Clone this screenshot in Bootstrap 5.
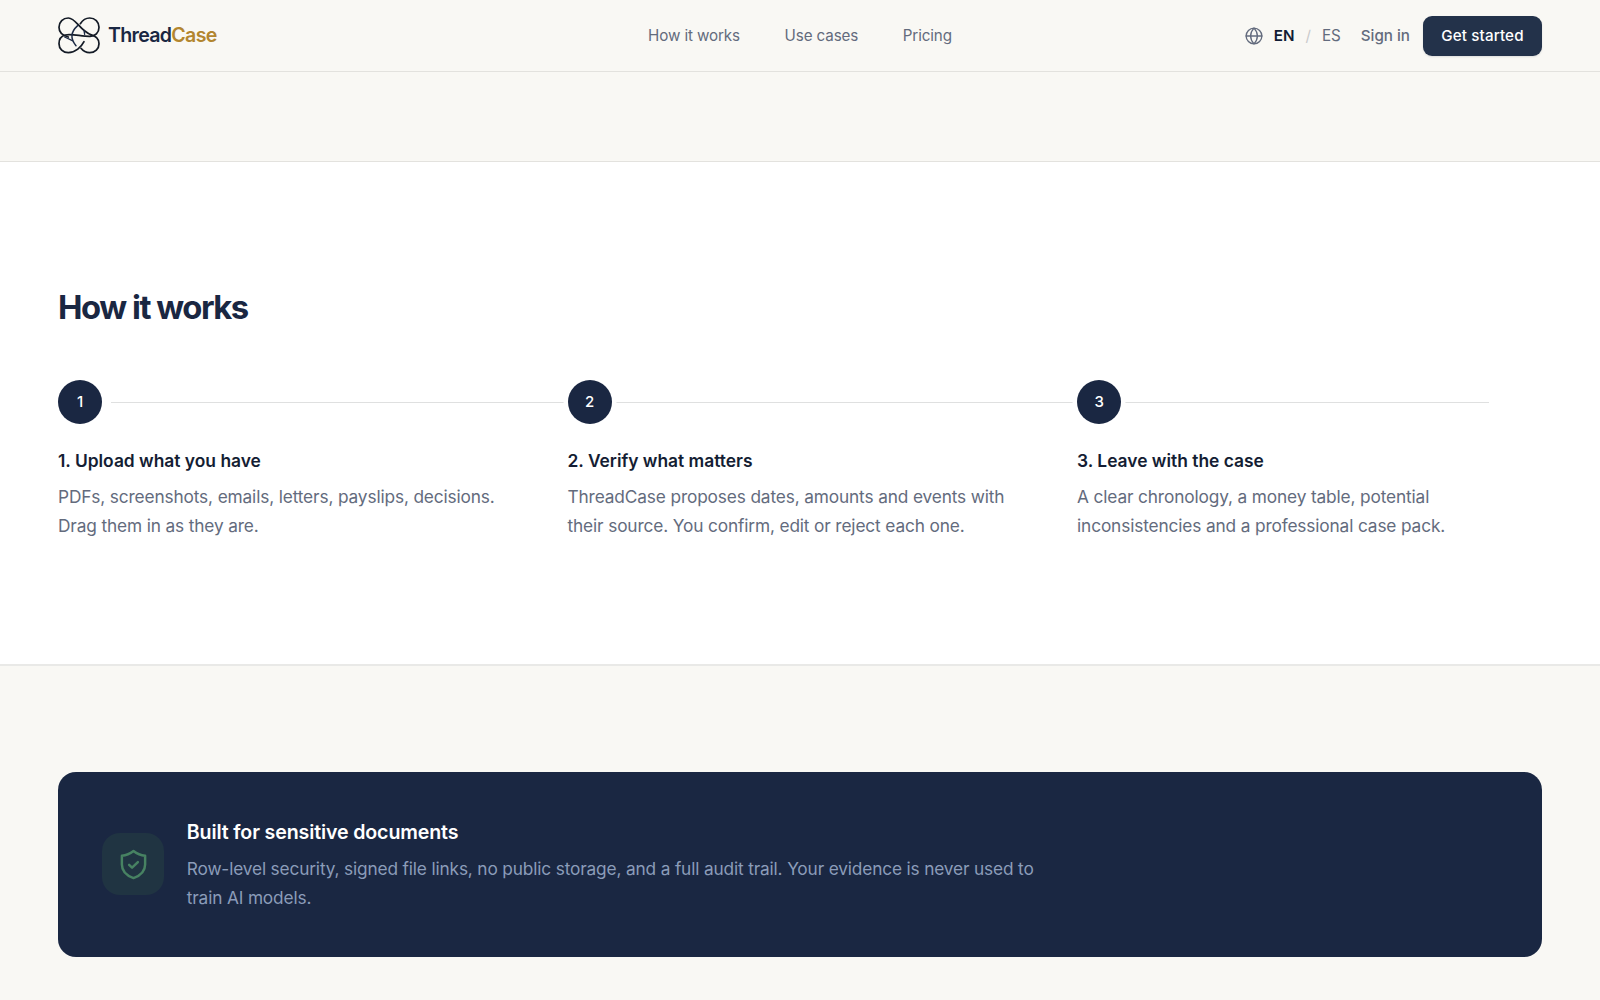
<!DOCTYPE html>
<html lang="en">
<head>
<meta charset="utf-8">
<meta name="viewport" content="width=device-width, initial-scale=1">
<title>ThreadCase</title>
<link href="https://cdn.jsdelivr.net/npm/bootstrap@5.3.0/dist/css/bootstrap.min.css" rel="stylesheet">
<style>
  :root{--ink:#1a2742;--muted:#636b7d;--rule:#e3e2de;--paper:#f9f8f4}
  html,body{height:100%;overflow:hidden}
  body{font-family:Inter,"Liberation Sans",sans-serif;background:var(--paper);color:var(--ink)}
  .page-wrap{padding-inline:58px}
  .site-header{height:72px;border-bottom:1px solid var(--rule);background:var(--paper)}
  .site-header .navbar{--bs-navbar-padding-y:0;height:71px}
  .side{flex:1 1 0}
  .brand-name{font-size:19.6px;font-weight:600;letter-spacing:-.7px;line-height:30px;padding-bottom:2px;color:var(--ink)}
  .brand-name span{color:#b3862f}
  .main-nav{gap:44.6px}
  .main-nav .top-link{letter-spacing:-.12px}
  .top-link{font-size:15.2px;line-height:24px;color:var(--muted);text-decoration:none;white-space:nowrap}
  .lang-on{font-weight:600;color:#111c33}
  .slash{color:#c9cacc}
  .btn-start{--bs-btn-bg:#23324a;--bs-btn-color:#fff;--bs-btn-border-width:0;--bs-btn-border-radius:9px;--bs-btn-padding-x:18px;--bs-btn-padding-y:0;--bs-btn-font-size:15.2px;--bs-btn-font-weight:500;width:119px;height:40px;padding-top:1px;letter-spacing:.12px;box-shadow:0 1px 2px rgba(20,30,50,.12);white-space:nowrap}
  .spacer-band{height:89px}
  .steps-section{height:505px;padding-top:122px;border-top:1px solid var(--rule);border-bottom:2px solid #e9e9e7;background:#fff}
  .steps-title{font-size:32.8px;line-height:46px;font-weight:700;letter-spacing:-1.46px;margin-bottom:50px}
  .steps{display:grid;grid-template-columns:repeat(3,1fr);column-gap:44.6px}
  .steps::before{content:"";position:absolute;left:53px;right:53.5px;top:22px;height:1px;background:#dfe0e0}
  .step-dot{position:relative;width:44.4px;height:44.4px;background:var(--ink);color:#fff;font-size:15px;font-weight:500;box-shadow:0 0 0 4.5px #fff}
  .step-name{font-size:17.4px;line-height:28px;font-weight:600;color:#141d33;margin:23px 0 8px}
  .copy-text{font-size:17.3px;line-height:28.9px;letter-spacing:-.145px;color:var(--muted)}
  .security-panel{margin-top:106px;height:184.5px;border-radius:18px;background:var(--ink);padding-inline:44px;gap:22.4px}
  .shield-tile{width:62.4px;height:62.4px;border-radius:18px;background:#203442}
  .panel-title{font-size:19.6px;line-height:30px;font-weight:600;letter-spacing:-.13px;color:#fff;margin:2px 0 8px}
  .panel-copy{max-width:855px;letter-spacing:-.16px;color:#8b9cb9}
</style>
</head>
<body>
<header class="site-header">
  <nav class="navbar page-wrap d-flex flex-nowrap align-items-center">
    <div class="side d-flex align-items-center">
      <a class="d-flex align-items-center text-decoration-none" href="#">
        <svg width="42" height="37" viewBox="0 0 126 111" fill="none" stroke="#141b26" stroke-width="5.2" stroke-linecap="round">
          <path d="M31 60C14 56 3 46 3 31C3 15 15 3 31 3C54 3 64 40 100 54"/>
          <path d="M67 20C74 9 84 3 95 3C111 3 123 15 123 31C123 47 112 59 94 58C70 58 40 50 22 54C10 57 3 67 3 80C3 95 15 107 31 107C52 107 70 90 78 74"/>
          <path d="M69 94C76 103 85 107 95 107C111 107 123 95 123 80C123 66 114 57 98 53"/>
          <path d="M59 26C38 45 37 66 54 86" stroke="#1d2b46" stroke-width="4.5"/>
          <path d="M20 60L43 71M78 40L80 52" stroke="#1d2b46" stroke-width="4"/>
        </svg>
        <span class="brand-name ms-2">Thread<span>Case</span></span>
      </a>
    </div>
    <div class="main-nav d-flex">
      <a class="top-link" href="#steps">How it works</a>
      <a class="top-link" href="#">Use cases</a>
      <a class="top-link" href="#">Pricing</a>
    </div>
    <div class="side d-flex align-items-center justify-content-end">
      <svg width="18" height="18" viewBox="0 0 24 24" fill="none" stroke="#636b7d" stroke-width="1.8" stroke-linecap="round" stroke-linejoin="round"><circle cx="12" cy="12" r="10.5"/><path d="M1.5 12h21M12 1.5c-6 6.3-6 14.7 0 21c6-6.3 6-14.7 0-21"/></svg>
      <a class="top-link lang-on" style="margin-left:11px" href="#">EN</a>
      <span class="top-link slash" style="margin-left:11px">/</span>
      <a class="top-link" style="margin-left:11px" href="#">ES</a>
      <a class="top-link fw-medium" style="margin-left:20px" href="#">Sign in</a>
      <a class="btn btn-start d-flex align-items-center justify-content-center" style="margin-left:13px" href="#">Get started</a>
    </div>
  </nav>
</header>
<main>
  <div class="spacer-band"></div>
  <section class="steps-section page-wrap" id="steps">
    <h2 class="steps-title">How it works</h2>
    <div class="steps position-relative">
      <div>
        <div class="step-dot rounded-circle d-flex align-items-center justify-content-center">1</div>
        <h3 class="step-name">1. Upload what you have</h3>
        <p class="copy-text mb-0">PDFs, screenshots, emails, letters, payslips, decisions.<br>Drag them in as they are.</p>
      </div>
      <div>
        <div class="step-dot rounded-circle d-flex align-items-center justify-content-center">2</div>
        <h3 class="step-name">2. Verify what matters</h3>
        <p class="copy-text mb-0">ThreadCase proposes dates, amounts and events with<br>their source. You confirm, edit or reject each one.</p>
      </div>
      <div>
        <div class="step-dot rounded-circle d-flex align-items-center justify-content-center">3</div>
        <h3 class="step-name">3. Leave with the case</h3>
        <p class="copy-text mb-0">A clear chronology, a money table, potential<br>inconsistencies and a professional case pack.</p>
      </div>
    </div>
  </section>
  <section class="page-wrap">
    <div class="security-panel d-flex align-items-center">
      <div class="shield-tile d-flex align-items-center justify-content-center flex-shrink-0">
        <svg width="31" height="31" viewBox="0 0 24 24" fill="none" stroke="#478262" stroke-width="1.9" stroke-linecap="round" stroke-linejoin="round"><path d="M12 1.6C9.3 3.7 6.500 4.900 3 5.200V12c0 5.600 3.900 8.700 9 10.500c5.100-1.800 9-4.900 9-10.500V5.200C17.500 4.900 14.700 3.700 12 1.600Z"/><path d="m8.600 12.300 2.300 2.200 4.500-4.400"/></svg>
      </div>
      <div>
        <h3 class="panel-title">Built for sensitive documents</h3>
        <p class="copy-text panel-copy mb-0">Row-level security, signed file links, no public storage, and a full audit trail. Your evidence is never used to train AI models.</p>
      </div>
    </div>
  </section>
</main>
<script src="https://cdn.jsdelivr.net/npm/bootstrap@5.3.0/dist/js/bootstrap.bundle.min.js"></script>
</body>
</html>
